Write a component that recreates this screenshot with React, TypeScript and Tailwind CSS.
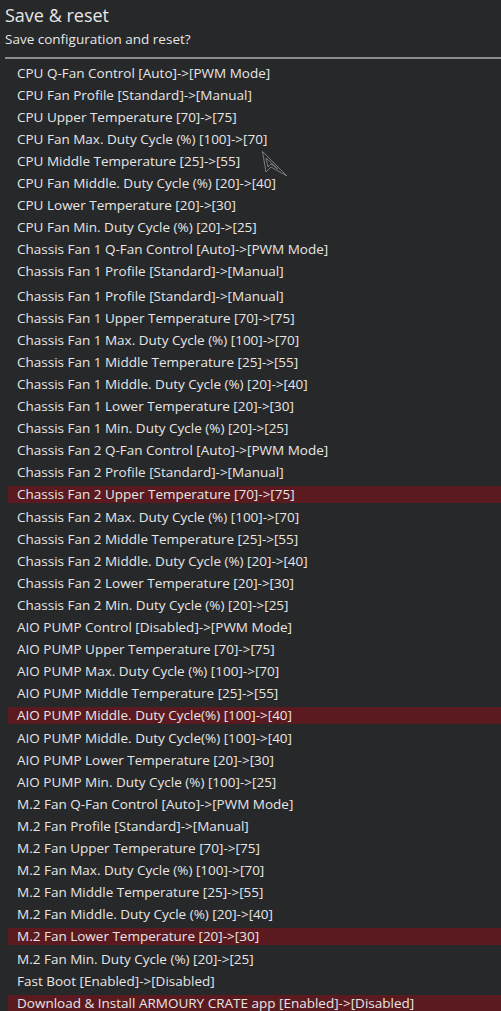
import React from "react";

interface Change {
  label: string;
  hot?: boolean;
  gap?: boolean;
}

const changes: Change[] = [
  { label: "CPU Q-Fan Control [Auto]->[PWM Mode]" },
  { label: "CPU Fan Profile [Standard]->[Manual]" },
  { label: "CPU Upper Temperature [70]->[75]" },
  { label: "CPU Fan Max. Duty Cycle (%) [100]->[70]" },
  { label: "CPU Middle Temperature [25]->[55]" },
  { label: "CPU Fan Middle. Duty Cycle (%) [20]->[40]" },
  { label: "CPU Lower Temperature [20]->[30]" },
  { label: "CPU Fan Min. Duty Cycle (%) [20]->[25]" },
  { label: "Chassis Fan 1 Q-Fan Control [Auto]->[PWM Mode]" },
  { label: "Chassis Fan 1 Profile [Standard]->[Manual]" },
  { label: "Chassis Fan 1 Profile [Standard]->[Manual]", gap: true },
  { label: "Chassis Fan 1 Upper Temperature [70]->[75]" },
  { label: "Chassis Fan 1 Max. Duty Cycle (%) [100]->[70]" },
  { label: "Chassis Fan 1 Middle Temperature [25]->[55]" },
  { label: "Chassis Fan 1 Middle. Duty Cycle (%) [20]->[40]" },
  { label: "Chassis Fan 1 Lower Temperature [20]->[30]" },
  { label: "Chassis Fan 1 Min. Duty Cycle (%) [20]->[25]" },
  { label: "Chassis Fan 2 Q-Fan Control [Auto]->[PWM Mode]" },
  { label: "Chassis Fan 2 Profile [Standard]->[Manual]" },
  { label: "Chassis Fan 2 Upper Temperature [70]->[75]", hot: true },
  { label: "Chassis Fan 2 Max. Duty Cycle (%) [100]->[70]" },
  { label: "Chassis Fan 2 Middle Temperature [25]->[55]" },
  { label: "Chassis Fan 2 Middle. Duty Cycle (%) [20]->[40]" },
  { label: "Chassis Fan 2 Lower Temperature [20]->[30]" },
  { label: "Chassis Fan 2 Min. Duty Cycle (%) [20]->[25]" },
  { label: "AIO PUMP Control [Disabled]->[PWM Mode]" },
  { label: "AIO PUMP Upper Temperature [70]->[75]" },
  { label: "AIO PUMP Max. Duty Cycle (%) [100]->[70]" },
  { label: "AIO PUMP Middle Temperature [25]->[55]" },
  { label: "AIO PUMP Middle. Duty Cycle(%) [100]->[40]", hot: true },
  { label: "AIO PUMP Middle. Duty Cycle(%) [100]->[40]" },
  { label: "AIO PUMP Lower Temperature [20]->[30]" },
  { label: "AIO PUMP Min. Duty Cycle (%) [100]->[25]" },
  { label: "M.2 Fan Q-Fan Control [Auto]->[PWM Mode]" },
  { label: "M.2 Fan Profile [Standard]->[Manual]" },
  { label: "M.2 Fan Upper Temperature [70]->[75]" },
  { label: "M.2 Fan Max. Duty Cycle (%) [100]->[70]" },
  { label: "M.2 Fan Middle Temperature [25]->[55]" },
  { label: "M.2 Fan Middle. Duty Cycle (%) [20]->[40]" },
  { label: "M.2 Fan Lower Temperature [20]->[30]", hot: true },
  { label: "M.2 Fan Min. Duty Cycle (%) [20]->[25]" },
  { label: "Fast Boot [Enabled]->[Disabled]" },
  { label: "Download & Install ARMOURY CRATE app [Enabled]->[Disabled]", hot: true },
];

export default function App() {
  return (
    <div
      className="relative h-[1011px] w-[501px] overflow-hidden bg-[#27282a] text-[#e6e6e6]"
      style={{ fontFamily: '"Open Sans", "Noto Sans", sans-serif' }}
    >
      {/* HEADER */}
      <div className="pl-[5px] pt-[2px]">
        <h1 className="text-[18px] leading-[26px]">Save &amp; reset</h1>
        <p className="text-[13.5px] leading-[22px]">Save configuration and reset?</p>
      </div>
      <div className="ml-[5px] mt-[7px] h-[2px] bg-[#8c8c8c]" />

      {/* CHANGE LIST */}
      <ul className="mt-[3px] pl-[8px]">
        {changes.map((c, i) => (
          <li
            key={i}
            className={`flex items-center ${c.hot ? "h-[23px]" : "h-[22px]"} ${
              c.gap ? "mt-[3px]" : ""
            }`}
          >
            <span
              className={`flex h-[17px] w-full items-center whitespace-nowrap pl-[9px] text-[13.5px] ${
                c.hot ? "bg-[#5b1a1f]" : ""
              }`}
            >
              {c.label}
            </span>
          </li>
        ))}
      </ul>

      {/* mouse cursor */}
      <svg
        className="absolute left-[261px] top-[150px]"
        width="28"
        height="28"
        viewBox="0 0 28 28"
        fill="none"
      >
        <path
          d="M1.5 1.5 L5 22 L10 17 L26 26 Z M5 8 L7 17 L10 14 L17 19 Z"
          stroke="#7d7d7d"
          strokeWidth="1"
          strokeLinejoin="round"
        />
      </svg>
    </div>
  );
}
